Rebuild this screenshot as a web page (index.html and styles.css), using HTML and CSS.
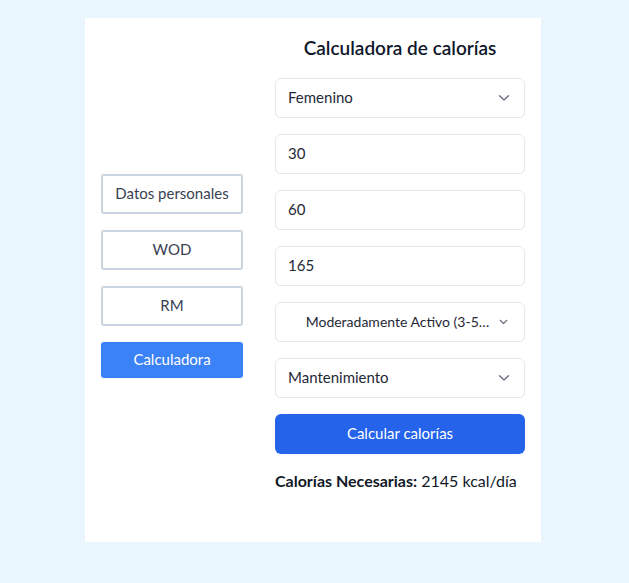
FILE: index.html
```html
<!DOCTYPE html>
<html lang="es">
<head>
<meta charset="utf-8">
<title>Calculadora de calorías</title>
<link rel="stylesheet" href="styles.css">
</head>
<body>
<main class="card">
  <nav class="menu">
    <button class="menu-btn">Datos personales</button>
    <button class="menu-btn">WOD</button>
    <button class="menu-btn">RM</button>
    <button class="menu-btn active">Calculadora</button>
  </nav>
  <section class="calc">
    <h1 class="title">Calculadora de calorías</h1>
    <div class="field select"><span class="val">Femenino</span><svg class="chev" width="12" height="8" viewBox="0 0 12 8"><path d="M1.5 1.8 L6 6 L10.5 1.8" fill="none" stroke="#6b7280" stroke-width="1.4" stroke-linecap="round" stroke-linejoin="round"/></svg></div>
    <div class="field"><span class="val">30</span></div>
    <div class="field"><span class="val">60</span></div>
    <div class="field"><span class="val">165</span></div>
    <div class="field select"><span class="val center">Moderadamente Activo (3-5…</span><svg class="chev small" width="9" height="6" viewBox="0 0 9 6"><path d="M1.2 1.3 L4.5 4.5 L7.8 1.3" fill="none" stroke="#6b7280" stroke-width="1.2" stroke-linecap="round" stroke-linejoin="round"/></svg></div>
    <div class="field select"><span class="val">Mantenimiento</span><svg class="chev" width="12" height="8" viewBox="0 0 12 8"><path d="M1.5 1.8 L6 6 L10.5 1.8" fill="none" stroke="#6b7280" stroke-width="1.4" stroke-linecap="round" stroke-linejoin="round"/></svg></div>
    <button class="submit">Calcular calorías</button>
    <p class="result"><strong>Calorías Necesarias:</strong> 2145 kcal/día</p>
  </section>
</main>
</body>
</html>
```

FILE: styles.css
```css
* { box-sizing: border-box; }
html, body { margin: 0; padding: 0; }
body {
  background: #eaf6fe;
  font-family: Lato, "Noto Sans", sans-serif;
  color: #1f2937;
  min-height: 583px;
  padding: 18px 0 0 85px;
}
.card {
  width: 456px;
  height: 524px;
  background: #ffffff;
  padding: 18px 16px 16px 16px;
  display: flex;
  gap: 32px;
  align-items: flex-start;
}
.menu {
  width: 142px;
  margin-top: 138px;
  display: flex;
  flex-direction: column;
  gap: 16px;
}
.menu-btn {
  height: 40px;
  border: 2px solid #cbd5e1;
  border-radius: 3px;
  background: #fff;
  color: #374151;
  font-family: inherit;
  font-size: 15px;
  line-height: 18px;
  padding: 0 0 2px;
}
.menu-btn.active {
  height: 36px;
  background: #3b82f6;
  border: none;
  color: #fff;
}
.calc {
  width: 250px;
  display: flex;
  flex-direction: column;
  gap: 16px;
}
.title {
  margin: 0;
  height: 26px;
  line-height: 24px;
  text-align: center;
  font-size: 19px;
  font-weight: 600;
  color: #0f172a;
}
.field {
  height: 40px;
  border: 1px solid #e2e8f0;
  border-radius: 6px;
  display: flex;
  align-items: center;
  padding: 0 14px 2px 12px;
  font-size: 15px;
  color: #1f2937;
}
.field .val { flex: 1; white-space: nowrap; overflow: hidden; }
.field .val.center { text-align: center; padding-left: 16px; font-size: 14px; }
.chev { flex: none; margin-top: 2px; }
.chev.small { margin-left: 8px; margin-right: 2px; }
.submit {
  height: 40px;
  border: none;
  border-radius: 6px;
  background: #2563eb;
  color: #fff;
  font-family: inherit;
  font-size: 15px;
  padding: 0 0 2px;
}
.result {
  margin: 0;
  padding-top: 1px;
  font-size: 16px;
  color: #111827;
}
.result strong { font-weight: 700; }
```
